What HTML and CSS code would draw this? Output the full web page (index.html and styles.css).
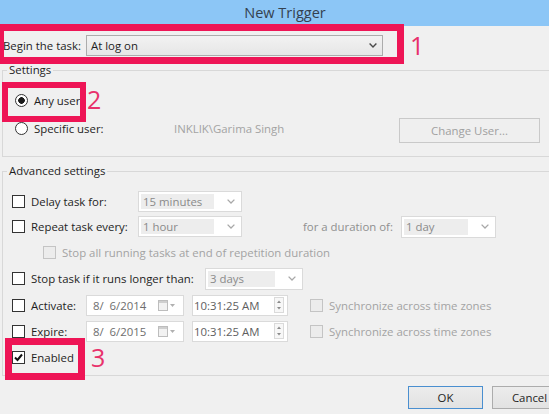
FILE: index.html
```html
<!DOCTYPE html>
<html>
<head>
<meta charset="utf-8">
<title>New Trigger</title>
<link rel="stylesheet" href="styles.css">
</head>
<body>
<div class="window">
  <div class="titlebar">New Trigger</div>
  <div class="client">
    <div class="begin">
      <span class="begin-label">Begin the task:</span>
      <div class="combo combo-main">
        <span>At log on</span>
        <svg class="chev" width="8" height="5" viewBox="0 0 8 5"><path d="M0.6 0.6 L4 4 L7.4 0.6" fill="none" stroke="#4a4a4a" stroke-width="1.4"/></svg>
      </div>
    </div>

    <fieldset class="group group-settings">
      <legend>Settings</legend>
      <div class="group-body settings-body">
        <div class="row row-h28">
          <span class="radio checked"></span><span>Any user</span>
        </div>
        <div class="row row-h28">
          <span class="radio"></span><span class="lbl-specific">Specific user:</span>
          <span class="user-name">INKLIK\Garima Singh</span>
          <button class="btn btn-disabled" disabled>Change User...</button>
        </div>
      </div>
    </fieldset>

    <fieldset class="group group-adv">
      <legend>Advanced settings</legend>
      <div class="group-body adv-body">
        <div class="row h25">
          <span class="cb"></span><span class="lbl lbl-107">Delay task for:</span>
          <div class="dcombo w104"><span class="dval">15 minutes</span><svg class="chev" width="8" height="5" viewBox="0 0 8 5"><path d="M0.6 0.6 L4 4 L7.4 0.6" fill="none" stroke="#a8a8a8" stroke-width="1.3"/></svg></div>
        </div>
        <div class="row h25">
          <span class="cb"></span><span class="lbl lbl-107">Repeat task every:</span>
          <div class="dcombo w104"><span class="dval">1 hour</span><svg class="chev" width="8" height="5" viewBox="0 0 8 5"><path d="M0.6 0.6 L4 4 L7.4 0.6" fill="none" stroke="#a8a8a8" stroke-width="1.3"/></svg></div>
          <span class="lbl lbl-duration">for a duration of:</span>
          <div class="dcombo w95 tall"><span class="dval">1 day</span><svg class="chev" width="8" height="5" viewBox="0 0 8 5"><path d="M0.6 0.6 L4 4 L7.4 0.6" fill="none" stroke="#a8a8a8" stroke-width="1.3"/></svg></div>
        </div>
        <div class="row h26">
          <span class="cb cb-disabled indent"></span><span class="lbl gray">Stop all running tasks at end of repetition duration</span>
        </div>
        <div class="row h27">
          <span class="cb"></span><span class="lbl lbl-174">Stop task if it runs longer than:</span>
          <div class="dcombo w98 tall"><span class="dval">3 days</span><svg class="chev" width="8" height="5" viewBox="0 0 8 5"><path d="M0.6 0.6 L4 4 L7.4 0.6" fill="none" stroke="#a8a8a8" stroke-width="1.3"/></svg></div>
        </div>
        <div class="row h26">
          <span class="cb"></span><span class="lbl lbl-55">Activate:</span>
          <div class="datebox"><span class="dtext">8/  6/2014</span>
            <svg class="cal" width="19" height="11" viewBox="0 0 19 11"><rect x="0.5" y="0.5" width="9" height="10" fill="#f2f2f2" stroke="#bdbdbd"/><rect x="1" y="1" width="8" height="2" fill="#cfcfcf"/><path d="M12 4 L17 4 L14.5 7 Z" fill="#b0b0b0"/></svg>
          </div>
          <div class="timebox"><span class="ttext">10:31:25 AM</span>
            <svg class="spin" width="10" height="16" viewBox="0 0 10 16"><rect x="0.5" y="0.5" width="9" height="15" fill="#f7f7f7" stroke="#dadada"/><path d="M3 6 L7 6 L5 3.5 Z" fill="#8a8a8a"/><path d="M3 10 L7 10 L5 12.5 Z" fill="#8a8a8a"/></svg>
          </div>
          <span class="cb cb-disabled sync"></span><span class="lbl gray">Synchronize across time zones</span>
        </div>
        <div class="row h26">
          <span class="cb"></span><span class="lbl lbl-55">Expire:</span>
          <div class="datebox"><span class="dtext">8/  6/2015</span>
            <svg class="cal" width="19" height="11" viewBox="0 0 19 11"><rect x="0.5" y="0.5" width="9" height="10" fill="#f2f2f2" stroke="#bdbdbd"/><rect x="1" y="1" width="8" height="2" fill="#cfcfcf"/><path d="M12 4 L17 4 L14.5 7 Z" fill="#b0b0b0"/></svg>
          </div>
          <div class="timebox"><span class="ttext">10:31:25 AM</span>
            <svg class="spin" width="10" height="16" viewBox="0 0 10 16"><rect x="0.5" y="0.5" width="9" height="15" fill="#f7f7f7" stroke="#dadada"/><path d="M3 6 L7 6 L5 3.5 Z" fill="#8a8a8a"/><path d="M3 10 L7 10 L5 12.5 Z" fill="#8a8a8a"/></svg>
          </div>
          <span class="cb cb-disabled sync"></span><span class="lbl gray">Synchronize across time zones</span>
        </div>
        <div class="row h27">
          <span class="cb cb-checked"><svg width="11" height="11" viewBox="0 0 11 11"><path d="M2 5.5 L4.5 8 L9 2.5" fill="none" stroke="#111" stroke-width="2"/></svg></span><span class="lbl">Enabled</span>
        </div>
      </div>
    </fieldset>

    <div class="buttons">
      <button class="btn btn-ok">OK</button>
      <button class="btn btn-cancel">Cancel</button>
    </div>
  </div>

  <div class="mark mark-1"></div>
  <div class="mark mark-2"></div>
  <div class="mark mark-3"></div>
  <span class="num num-1">1</span>
  <span class="num num-2">2</span>
  <span class="num num-3">3</span>
</div>
</body>
</html>
```

FILE: styles.css
```css
html, body {
  margin: 0;
  padding: 0;
}
body {
  background: #f0f0f0;
  font-family: "Open Sans", "Noto Sans", sans-serif;
  font-size: 11.4px;
  color: #1e1e1e;
  width: 549px;
  height: 414px;
  overflow: hidden;
}
.window {
  position: relative;
  width: 570px;
}
.titlebar {
  height: 26px;
  background: #8cc6f6;
  color: #34414f;
  font-size: 14.5px;
  line-height: 25px;
  text-align: center;
}
.begin {
  display: flex;
  align-items: center;
  height: 21px;
  margin-top: 9px;
  padding-left: 3px;
}
.begin-label {
  width: 83px;
}
.combo-main {
  width: 297px;
  height: 21px;
  box-sizing: border-box;
  border: 1px solid #acacac;
  background: linear-gradient(#f2f2f2, #e6e6e6);
  display: flex;
  align-items: center;
  justify-content: space-between;
  padding: 0 5px 0 4px;
}
.group {
  margin: 0 0 0 2px;
  padding: 0;
  min-width: 0;
  width: 580px;
  box-sizing: border-box;
  border: 1px solid #d8d8d8;
}
.group legend {
  padding: 0 2px;
  margin-left: 4px;
  line-height: 16px;
}
.group-settings {
  margin-top: 6px;
}
.group-adv {
  margin-top: 6px;
}
.settings-body {
  padding: 8px 0 14px 12px;
}
.adv-body {
  padding: 10px 0 4px 9px;
}
.row {
  display: flex;
  align-items: center;
}
.row-h28 { height: 28px; }
.h25 { height: 25px; }
.h26 { height: 26px; }
.h27 { height: 27px; }

.radio {
  width: 13px;
  height: 13px;
  box-sizing: border-box;
  border: 1px solid #333;
  border-radius: 50%;
  background: #fff;
  margin-right: 6px;
  flex: none;
}
.radio.checked {
  background: radial-gradient(circle, #1a1a1a 0 3px, #fff 3.6px);
}
.lbl-specific { width: 140px; }
.user-name {
  width: 225px;
  color: #a3a3a3;
}
.btn {
  font-family: inherit;
  font-size: 11.4px;
  box-sizing: border-box;
  padding: 0;
  color: #1e1e1e;
}
.btn-disabled {
  width: 141px;
  height: 25px;
  margin-top: 5px;
  border: 1px solid #c9c9c9;
  background: #efefef;
  color: #a0a0a0;
}
.cb {
  width: 13px;
  height: 13px;
  box-sizing: border-box;
  border: 1px solid #333;
  background: #fff;
  margin-right: 6px;
  flex: none;
  display: flex;
  align-items: center;
  justify-content: center;
}
.cb-disabled {
  border-color: #c4c4c4;
  background: #ececec;
}
.indent { margin-left: 31px; }
.sync { margin-left: 22px; }
.lbl { white-space: nowrap; }
.lbl-107 { width: 107px; }
.lbl-174 { width: 174px; }
.lbl-55 { width: 55px; }
.lbl-duration {
  width: 98px;
  margin-left: 61px;
  color: #8f8f8f;
}
.gray { color: #a3a3a3; }

.dcombo {
  height: 21px;
  box-sizing: border-box;
  border: 1px solid #dadada;
  background: #fff;
  display: flex;
  align-items: center;
  padding: 2px 6px 2px 2px;
}
.dcombo.tall { height: 22px; }
.dcombo .dval {
  flex: 1;
  align-self: stretch;
  background: #ededed;
  color: #8a8a8a;
  padding-left: 2px;
  margin-right: 13px;
  display: flex;
  align-items: center;
}
.w104 { width: 104px; }
.w98 { width: 98px; }
.w95 { width: 95px; }

.datebox, .timebox {
  height: 21px;
  box-sizing: border-box;
  border: 1px solid #dadada;
  background: #fff;
  display: flex;
  align-items: center;
  justify-content: space-between;
}
.datebox {
  width: 98px;
  padding: 0 6px 0 6px;
}
.dtext {
  white-space: pre;
  color: #6e6e6e;
}
.timebox {
  width: 96px;
  margin-left: 8px;
  padding: 0 3px 0 1px;
}
.ttext { color: #5e5e5e; }

.buttons {
  display: flex;
  gap: 9px;
  margin-top: 10px;
  margin-left: 408px;
}
.btn-ok, .btn-cancel {
  width: 75px;
  height: 23px;
  background: linear-gradient(#ececec, #e2e2e2);
}
.btn-ok { border: 1px solid #4a8fd0; }
.btn-cancel { border: 1px solid #acacac; }

.mark {
  position: absolute;
  box-sizing: border-box;
  border: 7px solid #ee1556;
}
.mark-1 { left: -3px; top: 24px; width: 407px; height: 40px; }
.mark-2 { left: 2px; top: 82px; width: 84px; height: 40px; border-width: 6px; }
.mark-3 { left: 5px; top: 338px; width: 80px; height: 42px; }
.num {
  position: absolute;
  color: #e8316b;
  font-size: 25px;
  line-height: 1;
}
.num-1 { left: 410px; top: 33px; }
.num-2 { left: 87px; top: 87px; }
.num-3 { left: 91px; top: 345px; }
```
